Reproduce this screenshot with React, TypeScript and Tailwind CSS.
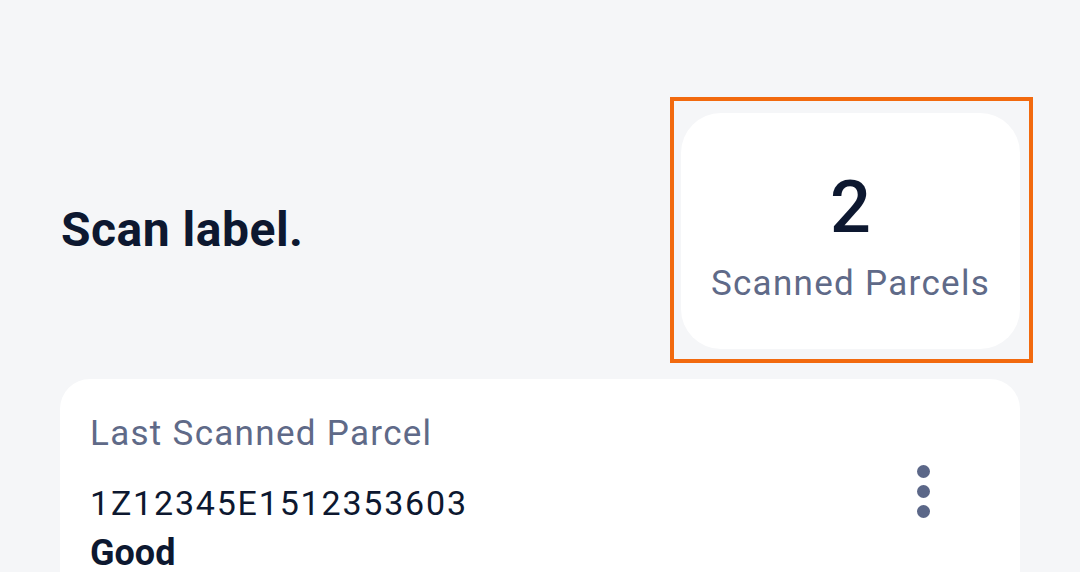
export default function App() {
  return (
    <div className="h-screen overflow-hidden bg-[#f5f6f8] px-[60px] pt-[97px] font-['Roboto',sans-serif]">
      {/* Header row */}
      <div className="flex items-center justify-between">
        <h1 className="ml-[1px] text-[48px] font-bold tracking-[0.5px] text-[#0d1830]">Scan label.</h1>
        <div className="-mr-[13px] border-4 border-[#f26a0f] pl-[7px] pr-[9px] pt-[12px] pb-[10px]">
          <div className="flex h-[236px] w-[339px] flex-col items-center justify-center rounded-[40px] bg-white pt-[10px]">
            <span className="text-[72px] font-medium leading-none text-[#0d1830]">2</span>
            <span className="mt-[22px] text-[35px] leading-none tracking-[1.3px] text-[#5f6a88]">
              Scanned Parcels
            </span>
          </div>
        </div>
      </div>

      {/* Last scanned parcel */}
      <div className="mt-[16px] flex justify-between rounded-[30px] bg-white pl-[30px] pr-[90px] pt-[29px] pb-[40px]">
        <div className="flex flex-col">
          <span className="text-[35px] tracking-[1.3px] text-[#5f6a88]">Last Scanned Parcel</span>
          <span className="mt-[22px] text-[34px] leading-[40px] tracking-[1.8px] text-[#0d1830]">
            1Z12345E1512353603
          </span>
          <span className="mt-[10px] text-[36px] leading-[40px] font-bold text-[#0d1830]">Good</span>
        </div>
        <div className="mt-[57px] flex flex-col gap-[7px]">
          <span className="h-[13px] w-[13px] rounded-full bg-[#5b6788]" />
          <span className="h-[13px] w-[13px] rounded-full bg-[#5b6788]" />
          <span className="h-[13px] w-[13px] rounded-full bg-[#5b6788]" />
        </div>
      </div>
    </div>
  );
}
